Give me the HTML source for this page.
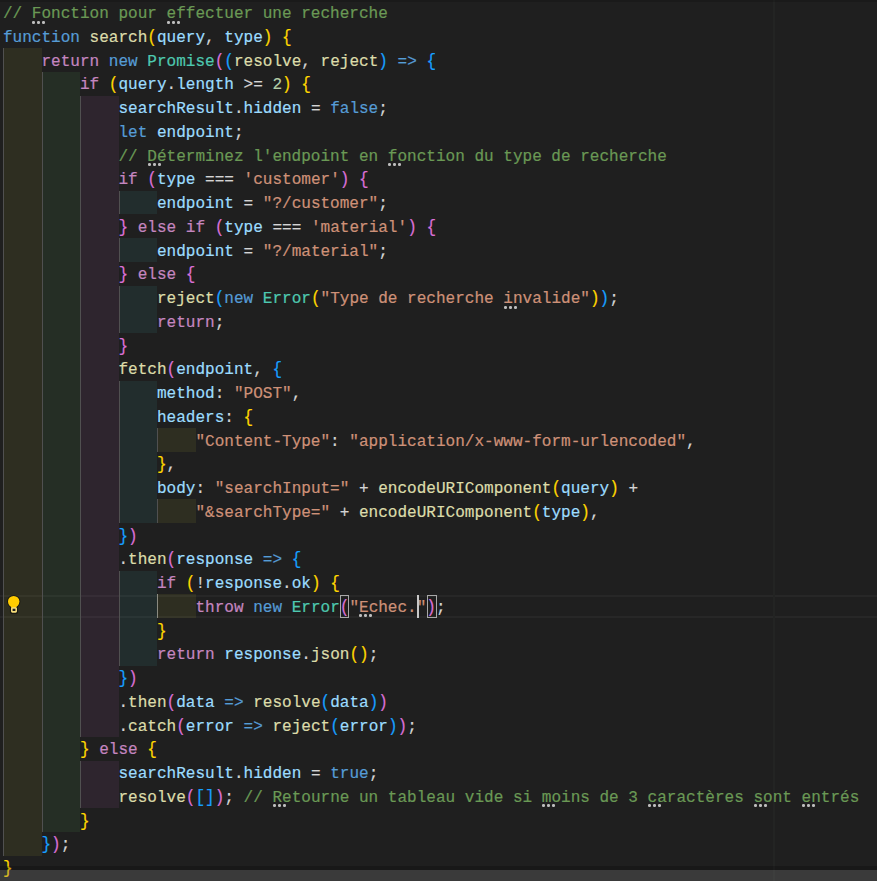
<!DOCTYPE html>
<html><head><meta charset="utf-8"><style>
html,body{margin:0;padding:0;}
body{width:877px;height:881px;overflow:hidden;background:#1f1f1f;position:relative;font-family:"Liberation Mono",monospace;font-size:16.04px;}
.r{position:absolute;height:23.75px;}
.g{position:absolute;width:1px;}
.l{position:absolute;left:3px;height:23.75px;line-height:23.75px;white-space:pre;-webkit-text-stroke:0.2px currentColor;}
.k{font-weight:normal;display:inline-block;transform:scaleY(1.18);transform-origin:50% 56%;}
.d{position:absolute;width:3px;height:3px;background:#bdbdbd;border-radius:1.2px;}
</style></head><body>

<div class="r" style="left:3px;top:48px;width:38.5px;background:rgba(255,255,64,0.07)"></div>
<div class="r" style="left:3px;top:71.75px;width:38.5px;background:rgba(255,255,64,0.07)"></div>
<div class="r" style="left:41.5px;top:71.75px;width:38.5px;background:rgba(127,255,127,0.07)"></div>
<div class="r" style="left:3px;top:95.5px;width:38.5px;background:rgba(255,255,64,0.07)"></div>
<div class="r" style="left:41.5px;top:95.5px;width:38.5px;background:rgba(127,255,127,0.07)"></div>
<div class="r" style="left:80px;top:95.5px;width:38.5px;background:rgba(255,127,255,0.07)"></div>
<div class="r" style="left:3px;top:119.25px;width:38.5px;background:rgba(255,255,64,0.07)"></div>
<div class="r" style="left:41.5px;top:119.25px;width:38.5px;background:rgba(127,255,127,0.07)"></div>
<div class="r" style="left:80px;top:119.25px;width:38.5px;background:rgba(255,127,255,0.07)"></div>
<div class="r" style="left:3px;top:143px;width:38.5px;background:rgba(255,255,64,0.07)"></div>
<div class="r" style="left:41.5px;top:143px;width:38.5px;background:rgba(127,255,127,0.07)"></div>
<div class="r" style="left:80px;top:143px;width:38.5px;background:rgba(255,127,255,0.07)"></div>
<div class="r" style="left:3px;top:166.75px;width:38.5px;background:rgba(255,255,64,0.07)"></div>
<div class="r" style="left:41.5px;top:166.75px;width:38.5px;background:rgba(127,255,127,0.07)"></div>
<div class="r" style="left:80px;top:166.75px;width:38.5px;background:rgba(255,127,255,0.07)"></div>
<div class="r" style="left:3px;top:190.5px;width:38.5px;background:rgba(255,255,64,0.07)"></div>
<div class="r" style="left:41.5px;top:190.5px;width:38.5px;background:rgba(127,255,127,0.07)"></div>
<div class="r" style="left:80px;top:190.5px;width:38.5px;background:rgba(255,127,255,0.07)"></div>
<div class="r" style="left:118.5px;top:190.5px;width:38.5px;background:rgba(79,236,236,0.07)"></div>
<div class="r" style="left:3px;top:214.25px;width:38.5px;background:rgba(255,255,64,0.07)"></div>
<div class="r" style="left:41.5px;top:214.25px;width:38.5px;background:rgba(127,255,127,0.07)"></div>
<div class="r" style="left:80px;top:214.25px;width:38.5px;background:rgba(255,127,255,0.07)"></div>
<div class="r" style="left:3px;top:238px;width:38.5px;background:rgba(255,255,64,0.07)"></div>
<div class="r" style="left:41.5px;top:238px;width:38.5px;background:rgba(127,255,127,0.07)"></div>
<div class="r" style="left:80px;top:238px;width:38.5px;background:rgba(255,127,255,0.07)"></div>
<div class="r" style="left:118.5px;top:238px;width:38.5px;background:rgba(79,236,236,0.07)"></div>
<div class="r" style="left:3px;top:261.75px;width:38.5px;background:rgba(255,255,64,0.07)"></div>
<div class="r" style="left:41.5px;top:261.75px;width:38.5px;background:rgba(127,255,127,0.07)"></div>
<div class="r" style="left:80px;top:261.75px;width:38.5px;background:rgba(255,127,255,0.07)"></div>
<div class="r" style="left:3px;top:285.5px;width:38.5px;background:rgba(255,255,64,0.07)"></div>
<div class="r" style="left:41.5px;top:285.5px;width:38.5px;background:rgba(127,255,127,0.07)"></div>
<div class="r" style="left:80px;top:285.5px;width:38.5px;background:rgba(255,127,255,0.07)"></div>
<div class="r" style="left:118.5px;top:285.5px;width:38.5px;background:rgba(79,236,236,0.07)"></div>
<div class="r" style="left:3px;top:309.25px;width:38.5px;background:rgba(255,255,64,0.07)"></div>
<div class="r" style="left:41.5px;top:309.25px;width:38.5px;background:rgba(127,255,127,0.07)"></div>
<div class="r" style="left:80px;top:309.25px;width:38.5px;background:rgba(255,127,255,0.07)"></div>
<div class="r" style="left:118.5px;top:309.25px;width:38.5px;background:rgba(79,236,236,0.07)"></div>
<div class="r" style="left:3px;top:333px;width:38.5px;background:rgba(255,255,64,0.07)"></div>
<div class="r" style="left:41.5px;top:333px;width:38.5px;background:rgba(127,255,127,0.07)"></div>
<div class="r" style="left:80px;top:333px;width:38.5px;background:rgba(255,127,255,0.07)"></div>
<div class="r" style="left:3px;top:356.75px;width:38.5px;background:rgba(255,255,64,0.07)"></div>
<div class="r" style="left:41.5px;top:356.75px;width:38.5px;background:rgba(127,255,127,0.07)"></div>
<div class="r" style="left:80px;top:356.75px;width:38.5px;background:rgba(255,127,255,0.07)"></div>
<div class="r" style="left:3px;top:380.5px;width:38.5px;background:rgba(255,255,64,0.07)"></div>
<div class="r" style="left:41.5px;top:380.5px;width:38.5px;background:rgba(127,255,127,0.07)"></div>
<div class="r" style="left:80px;top:380.5px;width:38.5px;background:rgba(255,127,255,0.07)"></div>
<div class="r" style="left:118.5px;top:380.5px;width:38.5px;background:rgba(79,236,236,0.07)"></div>
<div class="r" style="left:3px;top:404.25px;width:38.5px;background:rgba(255,255,64,0.07)"></div>
<div class="r" style="left:41.5px;top:404.25px;width:38.5px;background:rgba(127,255,127,0.07)"></div>
<div class="r" style="left:80px;top:404.25px;width:38.5px;background:rgba(255,127,255,0.07)"></div>
<div class="r" style="left:118.5px;top:404.25px;width:38.5px;background:rgba(79,236,236,0.07)"></div>
<div class="r" style="left:3px;top:428px;width:38.5px;background:rgba(255,255,64,0.07)"></div>
<div class="r" style="left:41.5px;top:428px;width:38.5px;background:rgba(127,255,127,0.07)"></div>
<div class="r" style="left:80px;top:428px;width:38.5px;background:rgba(255,127,255,0.07)"></div>
<div class="r" style="left:118.5px;top:428px;width:38.5px;background:rgba(79,236,236,0.07)"></div>
<div class="r" style="left:157px;top:428px;width:38.5px;background:rgba(255,255,64,0.07)"></div>
<div class="r" style="left:3px;top:451.75px;width:38.5px;background:rgba(255,255,64,0.07)"></div>
<div class="r" style="left:41.5px;top:451.75px;width:38.5px;background:rgba(127,255,127,0.07)"></div>
<div class="r" style="left:80px;top:451.75px;width:38.5px;background:rgba(255,127,255,0.07)"></div>
<div class="r" style="left:118.5px;top:451.75px;width:38.5px;background:rgba(79,236,236,0.07)"></div>
<div class="r" style="left:3px;top:475.5px;width:38.5px;background:rgba(255,255,64,0.07)"></div>
<div class="r" style="left:41.5px;top:475.5px;width:38.5px;background:rgba(127,255,127,0.07)"></div>
<div class="r" style="left:80px;top:475.5px;width:38.5px;background:rgba(255,127,255,0.07)"></div>
<div class="r" style="left:118.5px;top:475.5px;width:38.5px;background:rgba(79,236,236,0.07)"></div>
<div class="r" style="left:3px;top:499.25px;width:38.5px;background:rgba(255,255,64,0.07)"></div>
<div class="r" style="left:41.5px;top:499.25px;width:38.5px;background:rgba(127,255,127,0.07)"></div>
<div class="r" style="left:80px;top:499.25px;width:38.5px;background:rgba(255,127,255,0.07)"></div>
<div class="r" style="left:118.5px;top:499.25px;width:38.5px;background:rgba(79,236,236,0.07)"></div>
<div class="r" style="left:157px;top:499.25px;width:38.5px;background:rgba(255,255,64,0.07)"></div>
<div class="r" style="left:3px;top:523px;width:38.5px;background:rgba(255,255,64,0.07)"></div>
<div class="r" style="left:41.5px;top:523px;width:38.5px;background:rgba(127,255,127,0.07)"></div>
<div class="r" style="left:80px;top:523px;width:38.5px;background:rgba(255,127,255,0.07)"></div>
<div class="r" style="left:3px;top:546.75px;width:38.5px;background:rgba(255,255,64,0.07)"></div>
<div class="r" style="left:41.5px;top:546.75px;width:38.5px;background:rgba(127,255,127,0.07)"></div>
<div class="r" style="left:80px;top:546.75px;width:38.5px;background:rgba(255,127,255,0.07)"></div>
<div class="r" style="left:3px;top:570.5px;width:38.5px;background:rgba(255,255,64,0.07)"></div>
<div class="r" style="left:41.5px;top:570.5px;width:38.5px;background:rgba(127,255,127,0.07)"></div>
<div class="r" style="left:80px;top:570.5px;width:38.5px;background:rgba(255,127,255,0.07)"></div>
<div class="r" style="left:118.5px;top:570.5px;width:38.5px;background:rgba(79,236,236,0.07)"></div>
<div class="r" style="left:3px;top:594.25px;width:38.5px;background:rgba(255,255,64,0.07)"></div>
<div class="r" style="left:41.5px;top:594.25px;width:38.5px;background:rgba(127,255,127,0.07)"></div>
<div class="r" style="left:80px;top:594.25px;width:38.5px;background:rgba(255,127,255,0.07)"></div>
<div class="r" style="left:118.5px;top:594.25px;width:38.5px;background:rgba(79,236,236,0.07)"></div>
<div class="r" style="left:157px;top:594.25px;width:38.5px;background:rgba(255,255,64,0.07)"></div>
<div class="r" style="left:3px;top:618px;width:38.5px;background:rgba(255,255,64,0.07)"></div>
<div class="r" style="left:41.5px;top:618px;width:38.5px;background:rgba(127,255,127,0.07)"></div>
<div class="r" style="left:80px;top:618px;width:38.5px;background:rgba(255,127,255,0.07)"></div>
<div class="r" style="left:118.5px;top:618px;width:38.5px;background:rgba(79,236,236,0.07)"></div>
<div class="r" style="left:3px;top:641.75px;width:38.5px;background:rgba(255,255,64,0.07)"></div>
<div class="r" style="left:41.5px;top:641.75px;width:38.5px;background:rgba(127,255,127,0.07)"></div>
<div class="r" style="left:80px;top:641.75px;width:38.5px;background:rgba(255,127,255,0.07)"></div>
<div class="r" style="left:118.5px;top:641.75px;width:38.5px;background:rgba(79,236,236,0.07)"></div>
<div class="r" style="left:3px;top:665.5px;width:38.5px;background:rgba(255,255,64,0.07)"></div>
<div class="r" style="left:41.5px;top:665.5px;width:38.5px;background:rgba(127,255,127,0.07)"></div>
<div class="r" style="left:80px;top:665.5px;width:38.5px;background:rgba(255,127,255,0.07)"></div>
<div class="r" style="left:3px;top:689.25px;width:38.5px;background:rgba(255,255,64,0.07)"></div>
<div class="r" style="left:41.5px;top:689.25px;width:38.5px;background:rgba(127,255,127,0.07)"></div>
<div class="r" style="left:80px;top:689.25px;width:38.5px;background:rgba(255,127,255,0.07)"></div>
<div class="r" style="left:3px;top:713px;width:38.5px;background:rgba(255,255,64,0.07)"></div>
<div class="r" style="left:41.5px;top:713px;width:38.5px;background:rgba(127,255,127,0.07)"></div>
<div class="r" style="left:80px;top:713px;width:38.5px;background:rgba(255,127,255,0.07)"></div>
<div class="r" style="left:3px;top:736.75px;width:38.5px;background:rgba(255,255,64,0.07)"></div>
<div class="r" style="left:41.5px;top:736.75px;width:38.5px;background:rgba(127,255,127,0.07)"></div>
<div class="r" style="left:3px;top:760.5px;width:38.5px;background:rgba(255,255,64,0.07)"></div>
<div class="r" style="left:41.5px;top:760.5px;width:38.5px;background:rgba(127,255,127,0.07)"></div>
<div class="r" style="left:80px;top:760.5px;width:38.5px;background:rgba(255,127,255,0.07)"></div>
<div class="r" style="left:3px;top:784.25px;width:38.5px;background:rgba(255,255,64,0.07)"></div>
<div class="r" style="left:41.5px;top:784.25px;width:38.5px;background:rgba(127,255,127,0.07)"></div>
<div class="r" style="left:80px;top:784.25px;width:38.5px;background:rgba(255,127,255,0.07)"></div>
<div class="r" style="left:3px;top:808px;width:38.5px;background:rgba(255,255,64,0.07)"></div>
<div class="r" style="left:41.5px;top:808px;width:38.5px;background:rgba(127,255,127,0.07)"></div>
<div class="r" style="left:3px;top:831.75px;width:38.5px;background:rgba(255,255,64,0.07)"></div>
<div style="position:absolute;left:0;top:595px;width:877px;height:23.25px;box-sizing:border-box;border-top:2px solid rgba(255,255,255,0.04);border-bottom:2px solid rgba(255,255,255,0.04)"></div>
<div class="g" style="left:3px;top:48px;height:23.75px;background:#505050"></div>
<div class="g" style="left:3px;top:71.75px;height:23.75px;background:#505050"></div>
<div class="g" style="left:41.5px;top:71.75px;height:23.75px;background:#505050"></div>
<div class="g" style="left:3px;top:95.5px;height:23.75px;background:#505050"></div>
<div class="g" style="left:41.5px;top:95.5px;height:23.75px;background:#505050"></div>
<div class="g" style="left:80px;top:95.5px;height:23.75px;background:#505050"></div>
<div class="g" style="left:3px;top:119.25px;height:23.75px;background:#505050"></div>
<div class="g" style="left:41.5px;top:119.25px;height:23.75px;background:#505050"></div>
<div class="g" style="left:80px;top:119.25px;height:23.75px;background:#505050"></div>
<div class="g" style="left:3px;top:143px;height:23.75px;background:#505050"></div>
<div class="g" style="left:41.5px;top:143px;height:23.75px;background:#505050"></div>
<div class="g" style="left:80px;top:143px;height:23.75px;background:#505050"></div>
<div class="g" style="left:3px;top:166.75px;height:23.75px;background:#505050"></div>
<div class="g" style="left:41.5px;top:166.75px;height:23.75px;background:#505050"></div>
<div class="g" style="left:80px;top:166.75px;height:23.75px;background:#505050"></div>
<div class="g" style="left:3px;top:190.5px;height:23.75px;background:#505050"></div>
<div class="g" style="left:41.5px;top:190.5px;height:23.75px;background:#505050"></div>
<div class="g" style="left:80px;top:190.5px;height:23.75px;background:#505050"></div>
<div class="g" style="left:118.5px;top:190.5px;height:23.75px;background:#505050"></div>
<div class="g" style="left:3px;top:214.25px;height:23.75px;background:#505050"></div>
<div class="g" style="left:41.5px;top:214.25px;height:23.75px;background:#505050"></div>
<div class="g" style="left:80px;top:214.25px;height:23.75px;background:#505050"></div>
<div class="g" style="left:3px;top:238px;height:23.75px;background:#505050"></div>
<div class="g" style="left:41.5px;top:238px;height:23.75px;background:#505050"></div>
<div class="g" style="left:80px;top:238px;height:23.75px;background:#505050"></div>
<div class="g" style="left:118.5px;top:238px;height:23.75px;background:#505050"></div>
<div class="g" style="left:3px;top:261.75px;height:23.75px;background:#505050"></div>
<div class="g" style="left:41.5px;top:261.75px;height:23.75px;background:#505050"></div>
<div class="g" style="left:80px;top:261.75px;height:23.75px;background:#505050"></div>
<div class="g" style="left:3px;top:285.5px;height:23.75px;background:#505050"></div>
<div class="g" style="left:41.5px;top:285.5px;height:23.75px;background:#505050"></div>
<div class="g" style="left:80px;top:285.5px;height:23.75px;background:#505050"></div>
<div class="g" style="left:118.5px;top:285.5px;height:23.75px;background:#505050"></div>
<div class="g" style="left:3px;top:309.25px;height:23.75px;background:#505050"></div>
<div class="g" style="left:41.5px;top:309.25px;height:23.75px;background:#505050"></div>
<div class="g" style="left:80px;top:309.25px;height:23.75px;background:#505050"></div>
<div class="g" style="left:118.5px;top:309.25px;height:23.75px;background:#505050"></div>
<div class="g" style="left:3px;top:333px;height:23.75px;background:#505050"></div>
<div class="g" style="left:41.5px;top:333px;height:23.75px;background:#505050"></div>
<div class="g" style="left:80px;top:333px;height:23.75px;background:#505050"></div>
<div class="g" style="left:3px;top:356.75px;height:23.75px;background:#505050"></div>
<div class="g" style="left:41.5px;top:356.75px;height:23.75px;background:#505050"></div>
<div class="g" style="left:80px;top:356.75px;height:23.75px;background:#505050"></div>
<div class="g" style="left:3px;top:380.5px;height:23.75px;background:#505050"></div>
<div class="g" style="left:41.5px;top:380.5px;height:23.75px;background:#505050"></div>
<div class="g" style="left:80px;top:380.5px;height:23.75px;background:#505050"></div>
<div class="g" style="left:118.5px;top:380.5px;height:23.75px;background:#505050"></div>
<div class="g" style="left:3px;top:404.25px;height:23.75px;background:#505050"></div>
<div class="g" style="left:41.5px;top:404.25px;height:23.75px;background:#505050"></div>
<div class="g" style="left:80px;top:404.25px;height:23.75px;background:#505050"></div>
<div class="g" style="left:118.5px;top:404.25px;height:23.75px;background:#505050"></div>
<div class="g" style="left:3px;top:428px;height:23.75px;background:#505050"></div>
<div class="g" style="left:41.5px;top:428px;height:23.75px;background:#505050"></div>
<div class="g" style="left:80px;top:428px;height:23.75px;background:#505050"></div>
<div class="g" style="left:118.5px;top:428px;height:23.75px;background:#505050"></div>
<div class="g" style="left:157px;top:428px;height:23.75px;background:#505050"></div>
<div class="g" style="left:3px;top:451.75px;height:23.75px;background:#505050"></div>
<div class="g" style="left:41.5px;top:451.75px;height:23.75px;background:#505050"></div>
<div class="g" style="left:80px;top:451.75px;height:23.75px;background:#505050"></div>
<div class="g" style="left:118.5px;top:451.75px;height:23.75px;background:#505050"></div>
<div class="g" style="left:3px;top:475.5px;height:23.75px;background:#505050"></div>
<div class="g" style="left:41.5px;top:475.5px;height:23.75px;background:#505050"></div>
<div class="g" style="left:80px;top:475.5px;height:23.75px;background:#505050"></div>
<div class="g" style="left:118.5px;top:475.5px;height:23.75px;background:#505050"></div>
<div class="g" style="left:3px;top:499.25px;height:23.75px;background:#505050"></div>
<div class="g" style="left:41.5px;top:499.25px;height:23.75px;background:#505050"></div>
<div class="g" style="left:80px;top:499.25px;height:23.75px;background:#505050"></div>
<div class="g" style="left:118.5px;top:499.25px;height:23.75px;background:#505050"></div>
<div class="g" style="left:157px;top:499.25px;height:23.75px;background:#505050"></div>
<div class="g" style="left:3px;top:523px;height:23.75px;background:#505050"></div>
<div class="g" style="left:41.5px;top:523px;height:23.75px;background:#505050"></div>
<div class="g" style="left:80px;top:523px;height:23.75px;background:#505050"></div>
<div class="g" style="left:3px;top:546.75px;height:23.75px;background:#505050"></div>
<div class="g" style="left:41.5px;top:546.75px;height:23.75px;background:#505050"></div>
<div class="g" style="left:80px;top:546.75px;height:23.75px;background:#505050"></div>
<div class="g" style="left:3px;top:570.5px;height:23.75px;background:#505050"></div>
<div class="g" style="left:41.5px;top:570.5px;height:23.75px;background:#505050"></div>
<div class="g" style="left:80px;top:570.5px;height:23.75px;background:#505050"></div>
<div class="g" style="left:118.5px;top:570.5px;height:23.75px;background:#505050"></div>
<div class="g" style="left:3px;top:594.25px;height:23.75px;background:#505050"></div>
<div class="g" style="left:41.5px;top:594.25px;height:23.75px;background:#505050"></div>
<div class="g" style="left:80px;top:594.25px;height:23.75px;background:#505050"></div>
<div class="g" style="left:118.5px;top:594.25px;height:23.75px;background:#505050"></div>
<div class="g" style="left:157px;top:594.25px;height:23.75px;background:#8a8a80"></div>
<div class="g" style="left:3px;top:618px;height:23.75px;background:#505050"></div>
<div class="g" style="left:41.5px;top:618px;height:23.75px;background:#505050"></div>
<div class="g" style="left:80px;top:618px;height:23.75px;background:#505050"></div>
<div class="g" style="left:118.5px;top:618px;height:23.75px;background:#505050"></div>
<div class="g" style="left:3px;top:641.75px;height:23.75px;background:#505050"></div>
<div class="g" style="left:41.5px;top:641.75px;height:23.75px;background:#505050"></div>
<div class="g" style="left:80px;top:641.75px;height:23.75px;background:#505050"></div>
<div class="g" style="left:118.5px;top:641.75px;height:23.75px;background:#505050"></div>
<div class="g" style="left:3px;top:665.5px;height:23.75px;background:#505050"></div>
<div class="g" style="left:41.5px;top:665.5px;height:23.75px;background:#505050"></div>
<div class="g" style="left:80px;top:665.5px;height:23.75px;background:#505050"></div>
<div class="g" style="left:3px;top:689.25px;height:23.75px;background:#505050"></div>
<div class="g" style="left:41.5px;top:689.25px;height:23.75px;background:#505050"></div>
<div class="g" style="left:80px;top:689.25px;height:23.75px;background:#505050"></div>
<div class="g" style="left:3px;top:713px;height:23.75px;background:#505050"></div>
<div class="g" style="left:41.5px;top:713px;height:23.75px;background:#505050"></div>
<div class="g" style="left:80px;top:713px;height:23.75px;background:#505050"></div>
<div class="g" style="left:3px;top:736.75px;height:23.75px;background:#505050"></div>
<div class="g" style="left:41.5px;top:736.75px;height:23.75px;background:#505050"></div>
<div class="g" style="left:3px;top:760.5px;height:23.75px;background:#505050"></div>
<div class="g" style="left:41.5px;top:760.5px;height:23.75px;background:#505050"></div>
<div class="g" style="left:80px;top:760.5px;height:23.75px;background:#505050"></div>
<div class="g" style="left:3px;top:784.25px;height:23.75px;background:#505050"></div>
<div class="g" style="left:41.5px;top:784.25px;height:23.75px;background:#505050"></div>
<div class="g" style="left:80px;top:784.25px;height:23.75px;background:#505050"></div>
<div class="g" style="left:3px;top:808px;height:23.75px;background:#505050"></div>
<div class="g" style="left:41.5px;top:808px;height:23.75px;background:#505050"></div>
<div class="g" style="left:3px;top:831.75px;height:23.75px;background:#505050"></div>
<div style="position:absolute;left:773px;top:0;width:2px;height:881px;background:#232423"></div>
<div class="l" style="top:3px"><span style="color:#6A9955">// Fonction pour effectuer une recherche</span></div>
<div class="l" style="top:26.75px"><span style="color:#569CD6">function</span><span style="color:#D4D4D4"> </span><span style="color:#DCDCAA">search</span><span style="color:#FFD700"><b class="k">(</b></span><span style="color:#9CDCFE">query</span><span style="color:#D4D4D4">, </span><span style="color:#9CDCFE">type</span><span style="color:#FFD700"><b class="k">)</b></span><span style="color:#D4D4D4"> </span><span style="color:#FFD700"><b class="k">{</b></span></div>
<div class="l" style="top:50.5px">    <span style="color:#C586C0">return</span><span style="color:#D4D4D4"> </span><span style="color:#569CD6">new</span><span style="color:#D4D4D4"> </span><span style="color:#4EC9B0">Promise</span><span style="color:#DA70D6"><b class="k">(</b></span><span style="color:#179FFF"><b class="k">(</b></span><span style="color:#DCDCAA">resolve</span><span style="color:#D4D4D4">, </span><span style="color:#DCDCAA">reject</span><span style="color:#179FFF"><b class="k">)</b></span><span style="color:#D4D4D4"> </span><span style="color:#569CD6">=&gt;</span><span style="color:#D4D4D4"> </span><span style="color:#179FFF"><b class="k">{</b></span></div>
<div class="l" style="top:74.25px">        <span style="color:#C586C0">if</span><span style="color:#D4D4D4"> </span><span style="color:#FFD700"><b class="k">(</b></span><span style="color:#9CDCFE">query</span><span style="color:#D4D4D4">.</span><span style="color:#9CDCFE">length</span><span style="color:#D4D4D4"> &gt;= </span><span style="color:#B5CEA8">2</span><span style="color:#FFD700"><b class="k">)</b></span><span style="color:#D4D4D4"> </span><span style="color:#FFD700"><b class="k">{</b></span></div>
<div class="l" style="top:98px">            <span style="color:#9CDCFE">searchResult</span><span style="color:#D4D4D4">.</span><span style="color:#9CDCFE">hidden</span><span style="color:#D4D4D4"> = </span><span style="color:#569CD6">false</span><span style="color:#D4D4D4">;</span></div>
<div class="l" style="top:121.75px">            <span style="color:#569CD6">let</span><span style="color:#D4D4D4"> </span><span style="color:#9CDCFE">endpoint</span><span style="color:#D4D4D4">;</span></div>
<div class="l" style="top:145.5px">            <span style="color:#6A9955">// Déterminez l&#x27;endpoint en fonction du type de recherche</span></div>
<div class="l" style="top:169.25px">            <span style="color:#C586C0">if</span><span style="color:#D4D4D4"> </span><span style="color:#DA70D6"><b class="k">(</b></span><span style="color:#9CDCFE">type</span><span style="color:#D4D4D4"> === </span><span style="color:#CE9178">&#x27;customer&#x27;</span><span style="color:#DA70D6"><b class="k">)</b></span><span style="color:#D4D4D4"> </span><span style="color:#DA70D6"><b class="k">{</b></span></div>
<div class="l" style="top:193px">                <span style="color:#9CDCFE">endpoint</span><span style="color:#D4D4D4"> = </span><span style="color:#CE9178">&quot;?/customer&quot;</span><span style="color:#D4D4D4">;</span></div>
<div class="l" style="top:216.75px">            <span style="color:#DA70D6"><b class="k">}</b></span><span style="color:#D4D4D4"> </span><span style="color:#C586C0">else</span><span style="color:#D4D4D4"> </span><span style="color:#C586C0">if</span><span style="color:#D4D4D4"> </span><span style="color:#DA70D6"><b class="k">(</b></span><span style="color:#9CDCFE">type</span><span style="color:#D4D4D4"> === </span><span style="color:#CE9178">&#x27;material&#x27;</span><span style="color:#DA70D6"><b class="k">)</b></span><span style="color:#D4D4D4"> </span><span style="color:#DA70D6"><b class="k">{</b></span></div>
<div class="l" style="top:240.5px">                <span style="color:#9CDCFE">endpoint</span><span style="color:#D4D4D4"> = </span><span style="color:#CE9178">&quot;?/material&quot;</span><span style="color:#D4D4D4">;</span></div>
<div class="l" style="top:264.25px">            <span style="color:#DA70D6"><b class="k">}</b></span><span style="color:#D4D4D4"> </span><span style="color:#C586C0">else</span><span style="color:#D4D4D4"> </span><span style="color:#DA70D6"><b class="k">{</b></span></div>
<div class="l" style="top:288px">                <span style="color:#DCDCAA">reject</span><span style="color:#179FFF"><b class="k">(</b></span><span style="color:#569CD6">new</span><span style="color:#D4D4D4"> </span><span style="color:#4EC9B0">Error</span><span style="color:#FFD700"><b class="k">(</b></span><span style="color:#CE9178">&quot;Type de recherche invalide&quot;</span><span style="color:#FFD700"><b class="k">)</b></span><span style="color:#179FFF"><b class="k">)</b></span><span style="color:#D4D4D4">;</span></div>
<div class="l" style="top:311.75px">                <span style="color:#C586C0">return</span><span style="color:#D4D4D4">;</span></div>
<div class="l" style="top:335.5px">            <span style="color:#DA70D6"><b class="k">}</b></span></div>
<div class="l" style="top:359.25px">            <span style="color:#DCDCAA">fetch</span><span style="color:#DA70D6"><b class="k">(</b></span><span style="color:#9CDCFE">endpoint</span><span style="color:#D4D4D4">, </span><span style="color:#179FFF"><b class="k">{</b></span></div>
<div class="l" style="top:383px">                <span style="color:#9CDCFE">method</span><span style="color:#D4D4D4">: </span><span style="color:#CE9178">&quot;POST&quot;</span><span style="color:#D4D4D4">,</span></div>
<div class="l" style="top:406.75px">                <span style="color:#9CDCFE">headers</span><span style="color:#D4D4D4">: </span><span style="color:#FFD700"><b class="k">{</b></span></div>
<div class="l" style="top:430.5px">                    <span style="color:#CE9178">&quot;Content-Type&quot;</span><span style="color:#D4D4D4">: </span><span style="color:#CE9178">&quot;application/x-www-form-urlencoded&quot;</span><span style="color:#D4D4D4">,</span></div>
<div class="l" style="top:454.25px">                <span style="color:#FFD700"><b class="k">}</b></span><span style="color:#D4D4D4">,</span></div>
<div class="l" style="top:478px">                <span style="color:#9CDCFE">body</span><span style="color:#D4D4D4">: </span><span style="color:#CE9178">&quot;searchInput=&quot;</span><span style="color:#D4D4D4"> + </span><span style="color:#DCDCAA">encodeURIComponent</span><span style="color:#FFD700"><b class="k">(</b></span><span style="color:#9CDCFE">query</span><span style="color:#FFD700"><b class="k">)</b></span><span style="color:#D4D4D4"> +</span></div>
<div class="l" style="top:501.75px">                    <span style="color:#CE9178">&quot;&amp;searchType=&quot;</span><span style="color:#D4D4D4"> + </span><span style="color:#DCDCAA">encodeURIComponent</span><span style="color:#FFD700"><b class="k">(</b></span><span style="color:#9CDCFE">type</span><span style="color:#FFD700"><b class="k">)</b></span><span style="color:#D4D4D4">,</span></div>
<div class="l" style="top:525.5px">            <span style="color:#179FFF"><b class="k">}</b></span><span style="color:#DA70D6"><b class="k">)</b></span></div>
<div class="l" style="top:549.25px">            <span style="color:#D4D4D4">.</span><span style="color:#DCDCAA">then</span><span style="color:#DA70D6"><b class="k">(</b></span><span style="color:#9CDCFE">response</span><span style="color:#D4D4D4"> </span><span style="color:#569CD6">=&gt;</span><span style="color:#D4D4D4"> </span><span style="color:#179FFF"><b class="k">{</b></span></div>
<div class="l" style="top:573px">                <span style="color:#C586C0">if</span><span style="color:#D4D4D4"> </span><span style="color:#FFD700"><b class="k">(</b></span><span style="color:#D4D4D4">!</span><span style="color:#9CDCFE">response</span><span style="color:#D4D4D4">.</span><span style="color:#9CDCFE">ok</span><span style="color:#FFD700"><b class="k">)</b></span><span style="color:#D4D4D4"> </span><span style="color:#FFD700"><b class="k">{</b></span></div>
<div class="l" style="top:596.75px">                    <span style="color:#C586C0">throw</span><span style="color:#D4D4D4"> </span><span style="color:#569CD6">new</span><span style="color:#D4D4D4"> </span><span style="color:#4EC9B0">Error</span><span style="color:#DA70D6"><b class="k">(</b></span><span style="color:#CE9178">&quot;Echec.&quot;</span><span style="color:#DA70D6"><b class="k">)</b></span><span style="color:#D4D4D4">;</span></div>
<div class="l" style="top:620.5px">                <span style="color:#FFD700"><b class="k">}</b></span></div>
<div class="l" style="top:644.25px">                <span style="color:#C586C0">return</span><span style="color:#D4D4D4"> </span><span style="color:#9CDCFE">response</span><span style="color:#D4D4D4">.</span><span style="color:#DCDCAA">json</span><span style="color:#FFD700"><b class="k">(</b><b class="k">)</b></span><span style="color:#D4D4D4">;</span></div>
<div class="l" style="top:668px">            <span style="color:#179FFF"><b class="k">}</b></span><span style="color:#DA70D6"><b class="k">)</b></span></div>
<div class="l" style="top:691.75px">            <span style="color:#D4D4D4">.</span><span style="color:#DCDCAA">then</span><span style="color:#DA70D6"><b class="k">(</b></span><span style="color:#9CDCFE">data</span><span style="color:#D4D4D4"> </span><span style="color:#569CD6">=&gt;</span><span style="color:#D4D4D4"> </span><span style="color:#DCDCAA">resolve</span><span style="color:#179FFF"><b class="k">(</b></span><span style="color:#9CDCFE">data</span><span style="color:#179FFF"><b class="k">)</b></span><span style="color:#DA70D6"><b class="k">)</b></span></div>
<div class="l" style="top:715.5px">            <span style="color:#D4D4D4">.</span><span style="color:#DCDCAA">catch</span><span style="color:#DA70D6"><b class="k">(</b></span><span style="color:#9CDCFE">error</span><span style="color:#D4D4D4"> </span><span style="color:#569CD6">=&gt;</span><span style="color:#D4D4D4"> </span><span style="color:#DCDCAA">reject</span><span style="color:#179FFF"><b class="k">(</b></span><span style="color:#9CDCFE">error</span><span style="color:#179FFF"><b class="k">)</b></span><span style="color:#DA70D6"><b class="k">)</b></span><span style="color:#D4D4D4">;</span></div>
<div class="l" style="top:739.25px">        <span style="color:#FFD700"><b class="k">}</b></span><span style="color:#D4D4D4"> </span><span style="color:#C586C0">else</span><span style="color:#D4D4D4"> </span><span style="color:#FFD700"><b class="k">{</b></span></div>
<div class="l" style="top:763px">            <span style="color:#9CDCFE">searchResult</span><span style="color:#D4D4D4">.</span><span style="color:#9CDCFE">hidden</span><span style="color:#D4D4D4"> = </span><span style="color:#569CD6">true</span><span style="color:#D4D4D4">;</span></div>
<div class="l" style="top:786.75px">            <span style="color:#DCDCAA">resolve</span><span style="color:#DA70D6"><b class="k">(</b></span><span style="color:#179FFF"><b class="k">[</b></span><span style="color:#179FFF"><b class="k">]</b></span><span style="color:#DA70D6"><b class="k">)</b></span><span style="color:#D4D4D4">;</span><span style="color:#D4D4D4"> </span><span style="color:#6A9955">// Retourne un tableau vide si moins de 3 caractères sont entrés</span></div>
<div class="l" style="top:810.5px">        <span style="color:#FFD700"><b class="k">}</b></span></div>
<div class="l" style="top:834.25px">    <span style="color:#179FFF"><b class="k">}</b></span><span style="color:#DA70D6"><b class="k">)</b></span><span style="color:#D4D4D4">;</span></div>
<div class="l" style="top:858px"><span style="color:#FFD700"><b class="k">}</b></span></div>
<div style="position:absolute;left:339.575px;top:595px;width:9.625px;height:23px;box-sizing:border-box;border:1px solid #a8a8a8"></div>
<div style="position:absolute;left:427px;top:595px;width:9.625px;height:23px;box-sizing:border-box;border:1px solid #a8a8a8"></div>
<div style="position:absolute;left:416.575px;top:595px;width:2px;height:23px;background:#c8c8c8"></div>
<div class="d" style="left:32.075px;top:20.55px"></div>
<div class="d" style="left:37.075px;top:20.55px"></div>
<div class="d" style="left:42.075px;top:20.55px"></div>
<div class="d" style="left:166.825px;top:20.55px"></div>
<div class="d" style="left:171.825px;top:20.55px"></div>
<div class="d" style="left:176.825px;top:20.55px"></div>
<div class="d" style="left:147.575px;top:163.05px"></div>
<div class="d" style="left:152.575px;top:163.05px"></div>
<div class="d" style="left:157.575px;top:163.05px"></div>
<div class="d" style="left:388.2px;top:163.05px"></div>
<div class="d" style="left:393.2px;top:163.05px"></div>
<div class="d" style="left:398.2px;top:163.05px"></div>
<div class="d" style="left:503.7px;top:305.55px"></div>
<div class="d" style="left:508.7px;top:305.55px"></div>
<div class="d" style="left:513.7px;top:305.55px"></div>
<div class="d" style="left:359.325px;top:614.3px"></div>
<div class="d" style="left:364.325px;top:614.3px"></div>
<div class="d" style="left:369.325px;top:614.3px"></div>
<div class="d" style="left:272.7px;top:804.3px"></div>
<div class="d" style="left:277.7px;top:804.3px"></div>
<div class="d" style="left:282.7px;top:804.3px"></div>
<div class="d" style="left:542.2px;top:804.3px"></div>
<div class="d" style="left:547.2px;top:804.3px"></div>
<div class="d" style="left:552.2px;top:804.3px"></div>
<div class="d" style="left:648.075px;top:804.3px"></div>
<div class="d" style="left:653.075px;top:804.3px"></div>
<div class="d" style="left:658.075px;top:804.3px"></div>
<div class="d" style="left:753.95px;top:804.3px"></div>
<div class="d" style="left:758.95px;top:804.3px"></div>
<div class="d" style="left:763.95px;top:804.3px"></div>
<div class="d" style="left:802.075px;top:804.3px"></div>
<div class="d" style="left:807.075px;top:804.3px"></div>
<div class="d" style="left:812.075px;top:804.3px"></div>
<svg style="position:absolute;left:4px;top:594px" width="20" height="20" viewBox="0 0 20 20">
<g fill="none" stroke="rgba(10,10,10,0.55)" stroke-width="2.2"><circle cx="9.7" cy="7.6" r="5.6"/><rect x="7" y="13" width="6" height="6" rx="1"/></g>
<circle cx="9.7" cy="7.6" r="5.7" fill="#ffcc00"/>
<path d="M6.3 11.2 L7.4 14 L12 14 L13.1 11.2 Z" fill="#ffcc00"/>
<rect x="7.8" y="14" width="4.4" height="3.9" rx="0.6" fill="#1f1f1f" stroke="#f5dc7a" stroke-width="1.6"/>
</svg>
<div style="position:absolute;left:0;top:0;width:877px;height:2px;background:rgba(0,0,0,0.15)"></div>
<div style="position:absolute;left:0;top:865.5px;width:877px;height:4px;background:rgba(0,0,0,0.2)"></div>
<div style="position:absolute;left:0;top:869.5px;width:877px;height:12px;background:rgba(121,121,121,0.3)"></div>
</body></html>
